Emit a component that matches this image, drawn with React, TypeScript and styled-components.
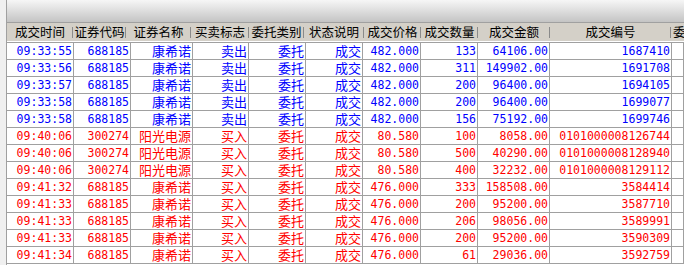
import React from "react";
import styled, { createGlobalStyle } from "styled-components";

const GlobalStyle = createGlobalStyle`
    html, body {
        margin: 0;
        padding: 0;
        background: #ffffff;
        overflow: hidden;
    }
    body {
        font-family: "Noto Sans CJK SC", "DejaVu Sans", sans-serif;
    }
`;

type Side = "sell" | "buy";

interface Trade {
    time: string;
    code: string;
    name: string;
    side: Side;
    price: string;
    qty: string;
    amount: string;
    no: string;
}

const trades: Trade[] = [
    { time: "09:33:55", code: "688185", name: "康希诺", side: "sell", price: "482.000", qty: "133", amount: "64106.00", no: "1687410" },
    { time: "09:33:56", code: "688185", name: "康希诺", side: "sell", price: "482.000", qty: "311", amount: "149902.00", no: "1691708" },
    { time: "09:33:57", code: "688185", name: "康希诺", side: "sell", price: "482.000", qty: "200", amount: "96400.00", no: "1694105" },
    { time: "09:33:58", code: "688185", name: "康希诺", side: "sell", price: "482.000", qty: "200", amount: "96400.00", no: "1699077" },
    { time: "09:33:58", code: "688185", name: "康希诺", side: "sell", price: "482.000", qty: "156", amount: "75192.00", no: "1699746" },
    { time: "09:40:06", code: "300274", name: "阳光电源", side: "buy", price: "80.580", qty: "100", amount: "8058.00", no: "0101000008126744" },
    { time: "09:40:06", code: "300274", name: "阳光电源", side: "buy", price: "80.580", qty: "500", amount: "40290.00", no: "0101000008128940" },
    { time: "09:40:06", code: "300274", name: "阳光电源", side: "buy", price: "80.580", qty: "400", amount: "32232.00", no: "0101000008129112" },
    { time: "09:41:32", code: "688185", name: "康希诺", side: "buy", price: "476.000", qty: "333", amount: "158508.00", no: "3584414" },
    { time: "09:41:33", code: "688185", name: "康希诺", side: "buy", price: "476.000", qty: "200", amount: "95200.00", no: "3587710" },
    { time: "09:41:33", code: "688185", name: "康希诺", side: "buy", price: "476.000", qty: "206", amount: "98056.00", no: "3589991" },
    { time: "09:41:33", code: "688185", name: "康希诺", side: "buy", price: "476.000", qty: "200", amount: "95200.00", no: "3590309" },
    { time: "09:41:34", code: "688185", name: "康希诺", side: "buy", price: "476.000", qty: "61", amount: "29036.00", no: "3592759" },
];

const headers = [
    "成交时间",
    "证券代码",
    "证券名称",
    "买卖标志",
    "委托类别",
    "状态说明",
    "成交价格",
    "成交数量",
    "成交金额",
    "成交编号",
    "委托编号",
];

const Page = styled.div`
    display: flex;
    width: 684px;
    height: 265px;
    overflow: hidden;
`;

const LeftStrip = styled.div`
    width: 6px;
    flex: none;
    background: #f0f0f0;
    border-right: 1px solid #a0a0a0;
`;

const Main = styled.div`
    flex: 1;
    min-width: 0;
    display: flex;
    flex-direction: column;
    overflow: hidden;
`;

const TopBar = styled.div`
    height: 22px;
    flex: none;
    background: linear-gradient(#f6f6f6, #c4c4c4);
    border-bottom: 1px solid #a0a0a0;
`;

const Header = styled.div`
    display: grid;
    grid-template-columns: 66px 53px 65px 58px 55px 60px 57px 57px 72px 121px 60px;
    height: 18px;
    flex: none;
    background: #d4d0c8;
    border-bottom: 1px solid #ffffff;
`;

const HeaderCell = styled.div`
    display: flex;
    align-items: center;
    justify-content: center;
    font-size: 12.5px;
    line-height: 18px;
    color: #000000;
    white-space: nowrap;
    background: linear-gradient(#8a8a8a, #8a8a8a) right center / 1px 11px no-repeat;

    &:last-child {
        background: none;
        justify-content: flex-start;
        padding-left: 2px;
    }
`;

const Rows = styled.div`
    border-top: 1px solid #a0a0a0;
`;

const Row = styled.div<{ $side: Side }>`
    display: grid;
    grid-template-columns: 67px 57px 62px 56px 57px 57px 58px 57px 72px 122px 1fr;
    height: 17px;
    box-sizing: border-box;
    border-bottom: 1px solid #a0a0a0;
    color: ${(p) => (p.$side === "sell" ? "#0000ff" : "#ff0000")};
`;

const Cell = styled.div<{ $cjk?: boolean }>`
    box-sizing: border-box;
    border-right: 1px solid #a0a0a0;
    padding-right: 1px;
    text-align: right;
    white-space: nowrap;
    height: 16px;
    line-height: 16px;
    font-family: ${(p) =>
        p.$cjk
            ? '"Noto Sans CJK SC", sans-serif'
            : '"DejaVu Sans Mono", "Liberation Mono", monospace'};
    font-size: ${(p) => (p.$cjk ? "13px" : "11.5px")};
`;

const App: React.FC = () => {
    return (
        <>
            <GlobalStyle />
            <Page>
                <LeftStrip />
                <Main>
                    <TopBar />
                    <Header>
                        {headers.map((h) => (
                            <HeaderCell key={h}>{h}</HeaderCell>
                        ))}
                    </Header>
                    <Rows>
                        {trades.map((t, i) => (
                            <Row key={i} $side={t.side}>
                                <Cell>{t.time}</Cell>
                                <Cell>{t.code}</Cell>
                                <Cell $cjk>{t.name}</Cell>
                                <Cell $cjk>{t.side === "sell" ? "卖出" : "买入"}</Cell>
                                <Cell $cjk>委托</Cell>
                                <Cell $cjk>成交</Cell>
                                <Cell>{t.price}</Cell>
                                <Cell>{t.qty}</Cell>
                                <Cell>{t.amount}</Cell>
                                <Cell>{t.no}</Cell>
                                <Cell />
                            </Row>
                        ))}
                    </Rows>
                </Main>
            </Page>
        </>
    );
};

export default App;
